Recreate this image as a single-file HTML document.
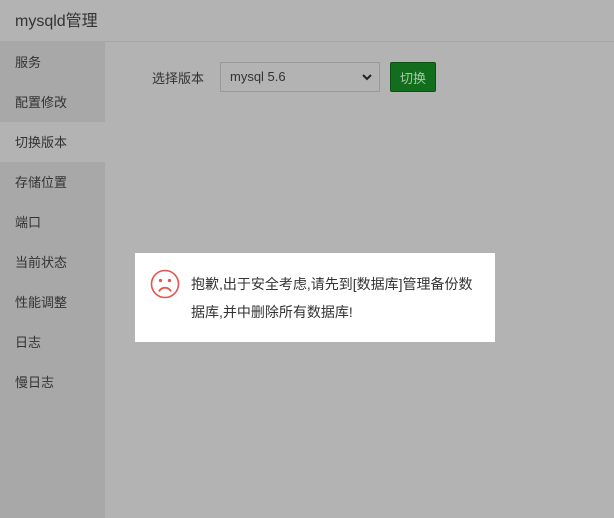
<!DOCTYPE html>
<html><head><meta charset="utf-8"><style>
*{margin:0;padding:0;box-sizing:border-box}
body{width:614px;height:518px;background:#b3b3b3;font-family:"Liberation Sans","Noto Sans CJK SC",sans-serif;position:relative;overflow:hidden;color:#333}
.hd{height:42px;border-bottom:1px solid #a6a6a6;font-size:16px;line-height:44px;padding-left:15px;color:#333}
.sb{position:absolute;left:0;top:42px;width:105px;bottom:0;background:#a8a8a8}
.sb div{height:40px;line-height:42px;padding-left:15px;font-size:13px;color:#333}
.sb .on{background:#b3b3b3}
.lbl{position:absolute;left:152px;top:68px;font-size:13px}
.sel{position:absolute;left:220px;top:62px;width:160px;height:30px;border:1px solid #999;background:#b3b3b3;font-size:13px;line-height:28px;padding-left:9px}
.sel svg{position:absolute;right:6px;top:10px}
.btn{position:absolute;left:390px;top:62px;width:46px;height:30px;background:#126d1c;border:1px solid #0c5214;border-radius:2px;color:#a8c8aa;font-size:13px;line-height:31px;text-align:center}
.dlg{position:absolute;left:135px;top:253px;width:360px;height:89px;background:#fff}
.dlg p{position:absolute;left:56px;top:17px;width:295px;font-size:14px;line-height:28px;color:#333}
.dlg svg{position:absolute;left:15px;top:16px}
</style></head><body>
<div class="hd">mysqld管理</div>
<div class="sb"><div>服务</div><div>配置修改</div><div class="on">切换版本</div><div>存储位置</div><div>端口</div><div>当前状态</div><div>性能调整</div><div>日志</div><div>慢日志</div></div>
<div class="lbl">选择版本</div>
<div class="sel">mysql 5.6<svg width="12" height="8" viewBox="0 0 12 8"><path d="M2 2l4 4 4-4" fill="none" stroke="#222" stroke-width="2"/></svg></div>
<div class="btn">切换</div>
<div class="dlg"><svg width="30" height="30" viewBox="0 0 30 30"><circle cx="15" cy="15" r="13.5" fill="none" stroke="#e5534b" stroke-width="1.6"/><circle cx="10.5" cy="11.5" r="1.6" fill="#e5534b"/><circle cx="19.5" cy="11.5" r="1.6" fill="#e5534b"/><path d="M9 22.5c2.5-5 9.5-5 12 0" fill="none" stroke="#e5534b" stroke-width="1.8"/></svg><p>抱歉,出于安全考虑,请先到[数据库]管理备份数据库,并中删除所有数据库!</p></div>
</body></html>
